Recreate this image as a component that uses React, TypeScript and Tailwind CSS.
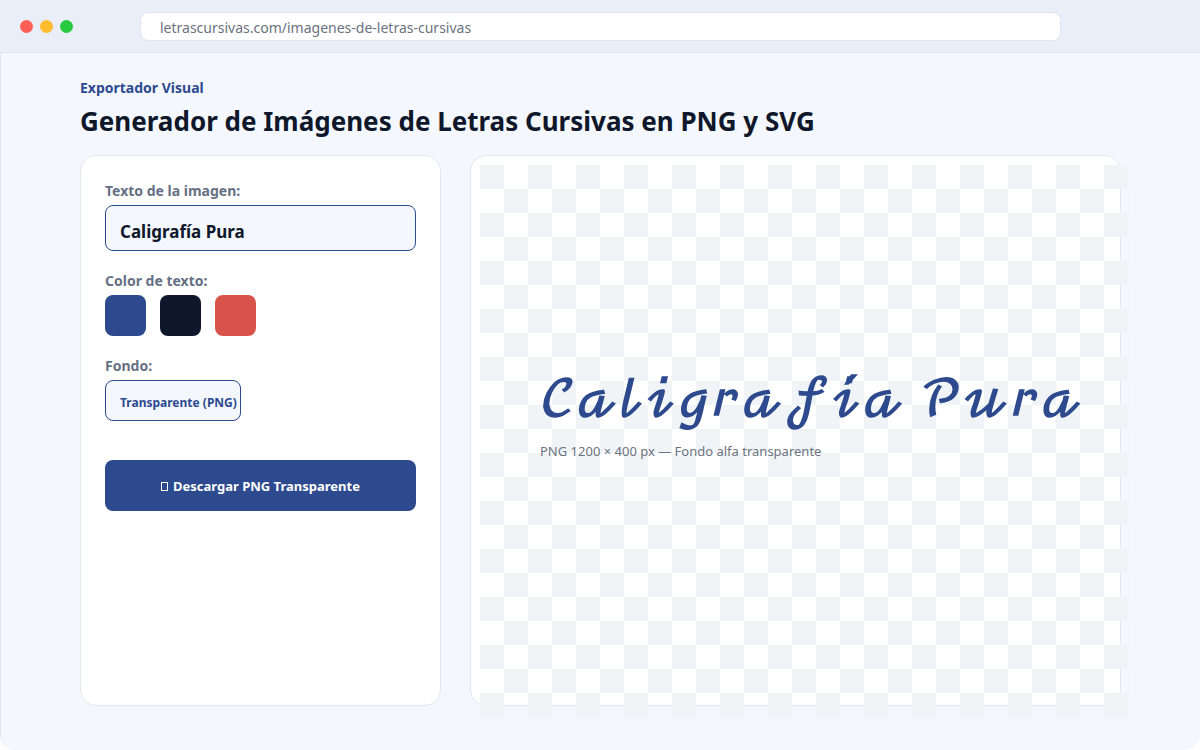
import React, { useState } from "react";

const COLORS = [
  { name: "Azul", value: "#2d4a8e" },
  { name: "Negro", value: "#0f172a" },
  { name: "Rojo", value: "#d9534a" }
];

// Script letters that live outside the main Unicode block
const SCRIPT_EXTRAS: Record<string, string> = {
  B: "ℬ", E: "ℰ", F: "ℱ", H: "ℋ", I: "ℐ", L: "ℒ", M: "ℳ", R: "ℛ", e: "ℯ", g: "ℊ", o: "ℴ"
};

// Swaps plain letters for their script forms, accents stay as combining marks
function toCursive(text: string) {
  return Array.from(text.normalize("NFD"))
    .map((ch) => {
      if (SCRIPT_EXTRAS[ch]) return SCRIPT_EXTRAS[ch];
      if (ch >= "A" && ch <= "Z") return String.fromCodePoint(0x1d49c + ch.charCodeAt(0) - 65);
      if (ch >= "a" && ch <= "z") return String.fromCodePoint(0x1d4b6 + ch.charCodeAt(0) - 97);
      return ch;
    })
    .join("");
}

function BrowserBar() {
  return (
    <header className="h-[53px] shrink-0 bg-[#e9eef8] border-b border-[#dfe5ef] flex items-center pl-5 pr-[139px]">
      <div className="flex gap-[7px] w-[120px] shrink-0">
        <span className="w-[13px] h-[13px] rounded-full bg-[#ff5f56]" />
        <span className="w-[13px] h-[13px] rounded-full bg-[#ffbd2e]" />
        <span className="w-[13px] h-[13px] rounded-full bg-[#27c93f]" />
      </div>
      <input
        type="text"
        aria-label="Dirección"
        defaultValue="letrascursivas.com/imagenes-de-letras-cursivas"
        className="flex-1 min-w-0 h-[29px] rounded-lg border border-[#dfe5ef] bg-white px-[19px] pt-[2px] text-sm text-[#6b7280] outline-none"
      />
    </header>
  );
}

export default function App() {
  const [text, setText] = useState("Caligrafía Pura");
  const [color, setColor] = useState(COLORS[0].value);

  return (
    <div className="min-h-screen flex flex-col bg-white font-['Noto_Sans','Open_Sans',sans-serif]">
      <BrowserBar />

      <main className="flex-1 flex flex-col bg-[#f4f7fe] border-l border-[#e2e8f0] rounded-b-2xl pl-[79px] pr-[79px] pt-[25px] pb-11">
        <p className="text-sm leading-5 font-bold text-[#2d4a8e]">Exportador Visual</p>
        <h1 className="mt-1 mb-[15px] text-[26px] leading-[38px] font-bold text-[#0f172a]">
          Generador de Imágenes de Letras Cursivas en PNG y SVG
        </h1>

        <div className="flex-1 grid grid-cols-[361px_1fr] gap-[29px]">
          {/* Options */}
          <form
            onSubmit={(e) => e.preventDefault()}
            className="bg-white border border-[#e2e8f0] rounded-2xl px-6 pt-[25px]"
          >
            <label htmlFor="texto" className="block text-sm leading-5 font-bold text-[#667085]">
              Texto de la imagen:
            </label>
            <input
              id="texto"
              type="text"
              value={text}
              onChange={(e) => setText(e.target.value)}
              className="mt-1 w-full h-[46px] rounded-lg border border-[#2d4a8e] bg-[#f4f7fe] px-[14px] pt-[6px] text-[17px] font-bold text-[#0f172a] outline-none"
            />

            <fieldset className="mt-5">
              <legend className="text-sm leading-5 font-bold text-[#667085]">Color de texto:</legend>
              <div className="mt-1 flex gap-[14px]">
                {COLORS.map((c) => (
                  <input
                    key={c.value}
                    type="radio"
                    name="color"
                    aria-label={c.name}
                    checked={color === c.value}
                    onChange={() => setColor(c.value)}
                    style={{ backgroundColor: c.value }}
                    className="appearance-none w-[41px] h-[41px] rounded-lg cursor-pointer"
                  />
                ))}
              </div>
            </fieldset>

            <label htmlFor="fondo" className="mt-5 block text-sm leading-5 font-bold text-[#667085]">
              Fondo:
            </label>
            <button
              id="fondo"
              type="button"
              className="mt-1 block w-[136px] h-[41px] rounded-lg border border-[#2d4a8e] bg-[#f4f7fe] pl-[14px] pt-1 text-left text-xs font-bold text-[#2d4a8e] whitespace-nowrap"
            >
              Transparente (PNG)
            </button>

            <button
              type="submit"
              className="mt-[39px] w-full h-[51px] rounded-lg bg-[#2d4a8e] text-white text-[13px] font-bold flex items-center justify-center gap-[5px] pt-[2px]"
            >
              <span className="w-[7px] h-[9px] border border-white" />
              Descargar PNG Transparente
            </button>
          </form>

          {/* Preview, the alpha grid runs slightly past the card's lower right edges */}
          <section className="relative bg-white border border-[#e2e8f0] rounded-2xl pt-[207px] pl-[69px]">
            <div className="absolute left-[9px] top-[9px] -right-[9px] -bottom-[13px] bg-[conic-gradient(transparent_25%,#f1f4f7_0_50%,transparent_0_75%,#f1f4f7_0)] bg-[size:48px_48px]" />
            <div className="relative">
              <p
                style={{ color }}
                className="text-[49px] leading-[76px] font-bold whitespace-nowrap font-['DejaVu_Math_TeX_Gyre','DejaVu_Serif',serif]"
              >
                {toCursive(text)}
              </p>
              <p className="mt-[2px] text-[13px] leading-5 text-[#6b7280]">PNG 1200 × 400 px — Fondo alfa transparente</p>
            </div>
          </section>
        </div>
      </main>
    </div>
  );
}
